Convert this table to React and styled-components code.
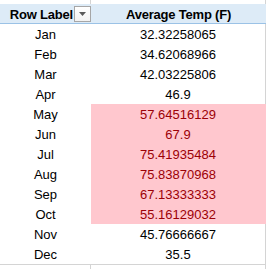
import React from 'react';
import styled, { createGlobalStyle } from 'styled-components';

const GlobalStyle = createGlobalStyle`
    html, body {
        margin: 0;
        padding: 0;
        background: #ffffff;
    }
    body {
        font-family: "Liberation Sans", Arial, sans-serif;
        font-size: 13px;
        color: #000000;
    }
`;

const rows = [
    { month: 'Jan', temp: '32.32258065' },
    { month: 'Feb', temp: '34.62068966' },
    { month: 'Mar', temp: '42.03225806' },
    { month: 'Apr', temp: '46.9' },
    { month: 'May', temp: '57.64516129', hot: true },
    { month: 'Jun', temp: '67.9', hot: true },
    { month: 'Jul', temp: '75.41935484', hot: true },
    { month: 'Aug', temp: '75.83870968', hot: true },
    { month: 'Sep', temp: '67.13333333', hot: true },
    { month: 'Oct', temp: '55.16129032', hot: true },
    { month: 'Nov', temp: '45.76666667' },
    { month: 'Dec', temp: '35.5' },
];

const Sheet = styled.div`
    width: 266px;
    display: grid;
    grid-template-columns: 91px 175px;
`;

const Spacer = styled.div`
    height: ${(p) => p.$h}px;
    box-sizing: border-box;
    border-right: 1px solid #d4d4d4;
    border-top: ${(p) => (p.$topLine ? '1px solid #d4d4d4' : 'none')};
`;

const HeaderCell = styled.div`
    height: 20px;
    box-sizing: border-box;
    background: #ddebf7;
    border-bottom: 1px solid #9bc2e6;
    display: flex;
    align-items: center;
    justify-content: ${(p) => (p.$left ? 'flex-end' : 'center')};
    font-weight: bold;
    letter-spacing: -0.2px;
    color: #000000;
    gap: 1px;
    padding-top: 1px;
`;

const FilterButton = styled.div`
    width: 17px;
    height: 16px;
    box-sizing: border-box;
    border: 1px solid #a6a6a6;
    background: linear-gradient(#ffffff, #f2f2f2);
    display: flex;
    align-items: center;
    justify-content: center;
    align-self: flex-start;
    margin-top: 1px;
`;

const Cell = styled.div`
    height: 20px;
    box-sizing: border-box;
    display: flex;
    align-items: center;
    justify-content: center;
    padding-top: 1px;
    background: ${(p) => (p.$hot ? '#ffc7ce' : 'transparent')};
    color: ${(p) => (p.$hot ? '#9c0006' : '#000000')};
    border-right: ${(p) => (p.$edge ? `1px solid ${p.$hot ? '#ffc7ce' : '#d4d4d4'}` : 'none')};
`;

const App = () => (
    <>
        <GlobalStyle />
        <Sheet>
            <Spacer $h={4} />
            <Spacer $h={4} />
            <HeaderCell $left>
                <span>Row Label</span>
                <FilterButton>
                    <svg width="7" height="4" viewBox="0 0 7 4">
                        <path d="M0 0 H7 L3.5 4 Z" fill="#595959" />
                    </svg>
                </FilterButton>
            </HeaderCell>
            <HeaderCell>Average Temp (F)</HeaderCell>
            {rows.map((r) => (
                <React.Fragment key={r.month}>
                    <Cell>{r.month}</Cell>
                    <Cell $hot={r.hot} $edge>
                        {r.temp}
                    </Cell>
                </React.Fragment>
            ))}
            <Spacer $h={5} $topLine />
            <Spacer $h={5} $topLine />
        </Sheet>
    </>
);

App.displayName = 'App';
export default App;
